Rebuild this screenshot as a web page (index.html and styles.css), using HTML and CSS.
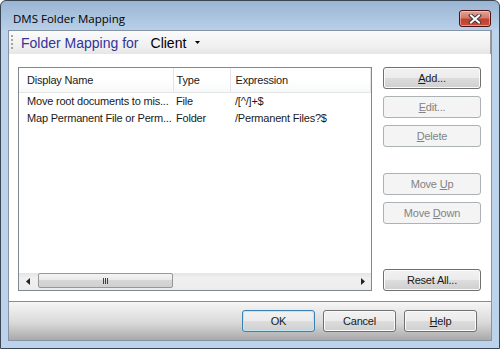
FILE: index.html
```html
<!DOCTYPE html>
<html lang="en">
<head>
  <meta charset="UTF-8" />
  <title>DMS Folder Mapping</title>
  <link rel="stylesheet" href="styles.css">
</head>
<body>
  <div class="window">
    <div class="titlebar">
      <span class="title">DMS Folder Mapping</span>
      <button class="close" title="Close">
        <svg width="14" height="10" viewBox="0 0 14 10">
          <path d="M3 1.5 L11 8.5 M11 1.5 L3 8.5" stroke="#3d3d3d" stroke-width="4" stroke-linecap="square" fill="none"/>
          <path d="M3 1.5 L11 8.5 M11 1.5 L3 8.5" stroke="#ffffff" stroke-width="2" stroke-linecap="square" fill="none"/>
        </svg>
      </button>
    </div>

    <div class="client">
      <div class="toolbar">
        <span class="grip"></span>
        <span class="heading">Folder Mapping for</span>
        <span class="picker">Client
          <svg width="5" height="3" viewBox="0 0 5 3"><path d="M0 0 H5 L2.5 3 Z" fill="#000"/></svg>
        </span>
      </div>

      <div class="main">
        <div class="list">
          <div class="list-body">
            <table>
              <colgroup>
                <col class="c-name">
                <col class="c-type">
                <col>
              </colgroup>
              <thead>
                <tr>
                  <th class="p-name">Display Name</th>
                  <th class="p-type">Type</th>
                  <th class="p-expr">Expression</th>
                </tr>
              </thead>
              <tbody>
                <tr>
                  <td class="p-name">Move root documents to mis...</td>
                  <td class="p-type">File</td>
                  <td class="p-expr">/[^/]+$</td>
                </tr>
                <tr>
                  <td class="p-name">Map Permanent File or Perm...</td>
                  <td class="p-type">Folder</td>
                  <td class="p-expr">/Permanent Files?$</td>
                </tr>
              </tbody>
            </table>
          </div>
          <div class="hscroll">
            <span class="arrow">
              <svg width="4" height="7" viewBox="0 0 4 7"><path d="M4 0 V7 L0 3.5 Z" fill="#222"/></svg>
            </span>
            <span class="thumb"><span class="grip-lines"></span></span>
            <span class="track"></span>
            <span class="arrow">
              <svg width="4" height="7" viewBox="0 0 4 7"><path d="M0 0 V7 L4 3.5 Z" fill="#222"/></svg>
            </span>
          </div>
        </div>

        <div class="side">
          <button class="btn"><u>A</u>dd...</button>
          <button class="btn" disabled><u>E</u>dit...</button>
          <button class="btn" disabled><u>D</u>elete</button>
          <button class="btn spaced" disabled>Move <u>U</u>p</button>
          <button class="btn" disabled>Move <u>D</u>own</button>
          <button class="btn bottom">Reset All...</button>
        </div>
      </div>

      <div class="footer">
        <button class="btn wide default">OK</button>
        <button class="btn wide">Cancel</button>
        <button class="btn wide"><u>H</u>elp</button>
      </div>
    </div>
  </div>
</body>
</html>
```

FILE: styles.css
```css
body { margin: 0; background: #fff; font-family: "Liberation Sans", Arial, sans-serif; font-size: 11px; letter-spacing: -0.2px; color: #1a1a1a; }

.window {
  width: 500px; height: 349px; box-sizing: border-box;
  border: 1px solid #3b4654; border-radius: 6px 6px 0 0;
  padding: 0 7px 7px;
  background: linear-gradient(#9ab5d3 0, #b9cfe8 29px, #bdd3eb 29px);
  display: flex; flex-direction: column;
}

.titlebar { height: 29px; display: flex; justify-content: space-between; align-items: flex-start; padding: 0 1px 0 5px; box-sizing: border-box; }
.title { margin-top: 10px; font-family: "Open Sans", "Noto Sans", sans-serif; font-size: 11.5px; line-height: 16px; letter-spacing: 0; color: #000; }
.close {
  margin-top: 9px; width: 32px; height: 17px; padding: 0; box-sizing: border-box;
  border: 1px solid #4c1212; border-radius: 3px;
  background: linear-gradient(#e2a497 0, #d47a6c 45%, #c2402f 55%, #c9503c 100%);
  box-shadow: inset 0 0 0 1px rgba(255, 220, 210, 0.5);
  display: flex; align-items: center; justify-content: center;
}

.client { flex: 1; display: flex; flex-direction: column; border: 1px solid #8594a5; background: #fff; }

.toolbar {
  height: 23px; display: flex; align-items: center;
  background: linear-gradient(#fbfbfb, #efefef 70%, #e6e6e6);
  border-right: 1px solid #9a9a9a;
}
.grip { width: 2px; height: 15px; margin-left: 2px; background: repeating-linear-gradient(#a5a5a5 0 2px, transparent 2px 4px); }
.heading { margin-left: 8px; font-size: 14px; letter-spacing: 0; color: #33339b; }
.picker { margin-left: 12px; font-size: 14px; letter-spacing: 0; color: #000; display: flex; align-items: center; gap: 9px; }

.main { flex: 1; display: flex; padding: 13px 10px 10px 9px; }

.list { width: 354px; box-sizing: border-box; border: 1px solid #828790; display: flex; flex-direction: column; }
.list-body { flex: 1; overflow: hidden; }
table { width: 100%; border-collapse: collapse; table-layout: fixed; }
.c-name { width: 154px; }
.c-type { width: 57px; }
th { height: 24px; box-sizing: border-box; font-weight: normal; text-align: left; padding: 0; background: linear-gradient(#fff 50%, #f7f8f9); border-bottom: 1px solid #e5e5e5; border-right: 1px solid #e5e5e5; }
td { height: 17px; padding: 0; white-space: nowrap; overflow: hidden; }
.p-name { padding-left: 8px; }
.p-type { padding-left: 3px; }
.p-expr { padding-left: 5px; }

.hscroll { height: 17px; display: flex; align-items: flex-start; background: linear-gradient(#e4e4e4, #f0f0f0 30%, #ececec); }
.hscroll .arrow { width: 17px; height: 17px; display: flex; align-items: center; justify-content: center; }
.thumb {
  width: 135px; height: 15px; margin-left: 2px; box-sizing: border-box;
  border: 1px solid #979797; border-radius: 2px;
  background: linear-gradient(#f4f4f4, #e8e8e8 50%, #d6d6d6 50%, #d0d0d0);
  display: flex; align-items: center; justify-content: center;
}
.grip-lines { width: 5px; height: 6px; background: repeating-linear-gradient(90deg, #404040 0 1px, transparent 1px 2px); }
.track { flex: 1; }

.side { width: 98px; margin-left: 11px; display: flex; flex-direction: column; gap: 7px; }

.btn {
  height: 22px; padding: 0; box-sizing: border-box;
  font-family: "Liberation Sans", Arial, sans-serif; font-size: 11px; letter-spacing: -0.2px; color: #1a1a1a;
  border: 1px solid #707070; border-radius: 3px;
  background: linear-gradient(#f2f2f2, #ebebeb 50%, #dddddd 50%, #cfcfcf);
  box-shadow: inset 0 0 0 1px #fbfbfb;
}
.btn:disabled { color: #838383; border-color: #adb2b5; background: #f4f4f4; box-shadow: none; }
.btn.spaced { margin-top: 19px; }
.btn.bottom { margin-top: auto; }
.btn.wide { width: 73px; }
.btn.default { border-color: #3c7fb1; box-shadow: inset 0 0 0 1px #bfe6f7; }

.footer {
  height: 39px; box-sizing: border-box; border-top: 1px solid #8c8c8c;
  background: linear-gradient(#f6f6f6, #d9d9d9 55%, #a9a9a9);
  display: flex; align-items: center; justify-content: flex-end; gap: 8px; padding: 0 14px 1px 0;
}
```
